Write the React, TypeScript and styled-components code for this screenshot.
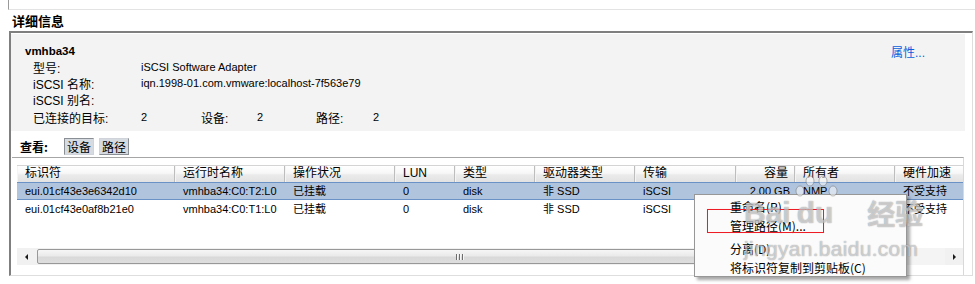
import React from "react";
import styled, { createGlobalStyle } from "styled-components";

const Global = createGlobalStyle`
  html, body { margin: 0; padding: 0; background: #ffffff; }
  body {
    font-family: "Liberation Sans", "Noto Sans CJK SC", sans-serif;
    font-size: 11px;
    color: #000;
  }
  * { box-sizing: border-box; }
`;

const Page = styled.div`
  position: relative;
  width: 975px;
  height: 284px;
  overflow: hidden;
`;

const PrevPanelEdge = styled.div`
  margin-left: 8px;
  height: 10px;
  border-left: 1px solid #9a9a9a;
  border-bottom: 1px solid #e3e3e3;
`;

const SectionTitle = styled.div`
  padding-left: 12px;
  height: 21px;
  line-height: 21px;
  font-family: "Noto Sans CJK SC", sans-serif;
  font-size: 13px;
  font-weight: bold;
`;

const Panel = styled.div`
  margin-left: 9px;
  width: 964px;
  height: 245px;
  border-top: 2px solid #7f7f7f;
  border-left: 2px solid #7f7f7f;
  border-right: 1px solid #dedede;
  border-bottom: 1px solid #dedede;
`;

const InfoBox = styled.div`
  margin: 1px 7px 0 0;
  height: 97px;
  background: #f3f3f3;
  padding: 9px 0 6px 0;
`;

const HeadRow = styled.div`
  display: flex;
  justify-content: space-between;
  align-items: center;
  height: 16px;
  padding: 0 40px 0 14px;
`;

const AdapterName = styled.span`
  font-weight: bold;
  font-size: 11.5px;
`;

const Link = styled.a`
  color: #0a5fdc;
  font-size: 12px;
  text-decoration: none;
  cursor: pointer;
`;

const FieldRow = styled.div<{ $gap?: number }>`
  display: flex;
  align-items: center;
  height: 16px;
  padding-left: 22px;
  margin-top: ${(p) => p.$gap ?? 0}px;
`;

const Label = styled.span<{ $w?: number }>`
  flex: 0 0 ${(p) => (p.$w ? `${p.$w}px` : "auto")};
  font-size: 12px;
  white-space: nowrap;
`;

const Value = styled.span<{ $w?: number }>`
  flex: 0 0 ${(p) => (p.$w ? `${p.$w}px` : "auto")};
  font-size: 11px;
  white-space: nowrap;
`;

const ViewBar = styled.div`
  display: flex;
  align-items: center;
  gap: 5px;
  height: 17px;
  margin-top: 7px;
  padding-left: 9px;
`;

const ViewLabel = styled.span`
  flex: 0 0 39px;
  font-family: "Noto Sans CJK SC", sans-serif;
  font-weight: bold;
  font-size: 12px;
`;

const ToggleButton = styled.button<{ $pressed?: boolean }>`
  width: 30px;
  height: 17px;
  padding: 0;
  margin: 0;
  font-family: "Noto Sans CJK SC", sans-serif;
  font-size: 12px;
  line-height: 15px;
  color: #000;
  background: #d6dbe2;
  border: 1px solid;
  border-color: ${(p) =>
    p.$pressed ? "#8a8f96 #d0d4da #d0d4da #8a8f96" : "#d0d4da #8a8f96 #8a8f96 #d0d4da"};
`;

const TableFrame = styled.div`
  margin: 2px 8px 0 1px;
  height: 118px;
  border-top: 1px solid #a6a6a6;
  border-right: 1px solid #d9d9d9;
  padding: 7px 0 0 5px;
`;

const ListView = styled.div`
  width: 946px;
  overflow: hidden;
`;

const HeaderRow = styled.div`
  display: flex;
  height: 17px;
  border-top: 1px solid #d4d4d4;
`;

const HeaderCell = styled.div<{ $w: number; $right?: boolean }>`
  flex: 0 0 ${(p) => p.$w}px;
  height: 16px;
  padding: 0 6px 0 7px;
  border-right: 1px solid #bdbdbd;
  border-left: 1px solid #f4f4f4;
  background: linear-gradient(#ffffff 0%, #f7f7f7 45%, #ebebeb 55%, #e2e2e2 100%);
  font-size: 12px;
  line-height: 15px;
  white-space: nowrap;
  text-align: ${(p) => (p.$right ? "right" : "left")};
`;

const Body = styled.div`
  height: 66px;
`;

const Row = styled.div<{ $selected?: boolean }>`
  display: flex;
  height: 18px;
  border-top: 1px solid ${(p) => (p.$selected ? "#6a92c6" : "transparent")};
  border-bottom: 1px solid ${(p) => (p.$selected ? "#6a92c6" : "transparent")};
  background: ${(p) => (p.$selected ? "#b0c4de" : "transparent")};
`;

const Cell = styled.div<{ $w: number; $right?: boolean }>`
  flex: 0 0 ${(p) => p.$w}px;
  padding: 0 5px 0 8px;
  line-height: 16px;
  white-space: nowrap;
  overflow: hidden;
  text-align: ${(p) => (p.$right ? "right" : "left")};
`;

const HScroll = styled.div`
  display: flex;
  align-items: center;
  height: 17px;
  background: #f1f1f1;
`;

const ArrowButton = styled.div`
  flex: 0 0 18px;
  height: 17px;
  display: flex;
  align-items: center;
  justify-content: center;
`;

const Arrow = styled.span<{ $dir: "left" | "right" }>`
  width: 0;
  height: 0;
  border-top: 3px solid transparent;
  border-bottom: 3px solid transparent;
  ${(p) => (p.$dir === "left" ? "border-right: 3px solid #1a1a1a;" : "border-left: 3px solid #1a1a1a;")}
`;

const Thumb = styled.div`
  flex: 0 0 846px;
  margin-left: 2px;
  height: 15px;
  border: 1px solid #989898;
  border-radius: 2px;
  background: linear-gradient(#f6f6f6 0%, #eaeaea 45%, #d9d9d9 55%, #dedede 100%);
  display: flex;
  align-items: center;
  justify-content: center;
  gap: 1px;
`;

const GripLine = styled.span`
  width: 1px;
  height: 6px;
  background: #6d6d6d;
  box-shadow: 1px 0 0 #f7f7f7;
  margin-right: 1px;
`;

const Track = styled.div`
  flex: 1;
  height: 17px;
  background: #f4f4f4;
`;

const ContextMenu = styled.div`
  position: absolute;
  left: 694px;
  top: 194px;
  width: 213px;
  height: 83px;
  padding: 2px 0;
  background: #fbfbfb;
  border: 1px solid #979797;
  box-shadow: 3px 3px 3px rgba(0, 0, 0, 0.35);
  font-family: "Noto Sans CJK SC", sans-serif;
  font-size: 12px;
`;

const MenuItem = styled.div`
  height: 19px;
  line-height: 19px;
  padding-left: 35px;
  white-space: nowrap;
`;

const MenuSeparator = styled.div`
  height: 4px;
`;

const Annotation = styled.div`
  position: absolute;
  left: 707px;
  top: 209px;
  width: 117px;
  height: 24px;
  border: 1px solid #ee1c24;
  box-shadow: 0 0 0.5px #ee1c24;
`;

const Watermark = styled.div`
  position: absolute;
  left: 744px;
  top: 176px;
  pointer-events: none;
  color: rgba(255, 255, 255, 0.5);
  text-shadow: 0 0 1px rgba(80, 80, 80, 0.45), 0 0 1px rgba(80, 80, 80, 0.3);
  font-family: "Liberation Sans", "Noto Sans CJK SC", sans-serif;
`;

const WatermarkLogo = styled.div`
  display: flex;
  align-items: flex-end;
  height: 52px;
  font-size: 30px;
  font-weight: bold;
  line-height: 30px;
`;

const DuMark = styled.span`
  position: relative;
  margin-left: 6px;
`;

const Toes = styled.svg`
  position: absolute;
  left: -4px;
  top: -24px;
`;

const WatermarkHan = styled.span`
  margin-left: 34px;
  font-family: "Noto Sans CJK SC", sans-serif;
  font-size: 28px;
`;

const WatermarkSite = styled.div`
  margin-top: 10px;
  font-size: 21px;
  line-height: 22px;
  letter-spacing: 0.3px;
`;

type Col = { title: string; width: number; right?: boolean };

const columns: Col[] = [
  { title: "标识符", width: 158 },
  { title: "运行时名称", width: 110 },
  { title: "操作状况", width: 110 },
  { title: "LUN", width: 60 },
  { title: "类型", width: 80 },
  { title: "驱动器类型", width: 100 },
  { title: "传输", width: 101 },
  { title: "容量", width: 59, right: true },
  { title: "所有者", width: 100 },
  { title: "硬件加速", width: 100 },
];

const rows: string[][] = [
  ["eui.01cf43e3e6342d10", "vmhba34:C0:T2:L0", "已挂载", "0", "disk", "非 SSD", "iSCSI", "2.00 GB", "NMP", "不受支持"],
  ["eui.01cf43e0af8b21e0", "vmhba34:C0:T1:L0", "已挂载", "0", "disk", "非 SSD", "iSCSI", "2.00 GB", "NMP", "不受支持"],
];

export default function App() {
  return (
    <Page>
      <Global />
      <PrevPanelEdge />
      <SectionTitle>详细信息</SectionTitle>
      <Panel>
        <InfoBox>
          <HeadRow>
            <AdapterName>vmhba34</AdapterName>
            <Link>属性...</Link>
          </HeadRow>
          <FieldRow>
            <Label $w={108}>型号:</Label>
            <Value>iSCSI Software Adapter</Value>
          </FieldRow>
          <FieldRow>
            <Label $w={108}>iSCSI 名称:</Label>
            <Value>iqn.1998-01.com.vmware:localhost-7f563e79</Value>
          </FieldRow>
          <FieldRow>
            <Label $w={108}>iSCSI 别名:</Label>
          </FieldRow>
          <FieldRow $gap={2}>
            <Label $w={108}>已连接的目标:</Label>
            <Value $w={60}>2</Value>
            <Label $w={56}>设备:</Label>
            <Value $w={59}>2</Value>
            <Label $w={57}>路径:</Label>
            <Value>2</Value>
          </FieldRow>
        </InfoBox>
        <ViewBar>
          <ViewLabel>查看:</ViewLabel>
          <ToggleButton $pressed>设备</ToggleButton>
          <ToggleButton>路径</ToggleButton>
        </ViewBar>
        <TableFrame>
          <ListView>
            <HeaderRow>
              {columns.map((c) => (
                <HeaderCell key={c.title} $w={c.width} $right={c.right}>
                  {c.title}
                </HeaderCell>
              ))}
            </HeaderRow>
            <Body>
              {rows.map((r, i) => (
                <Row key={r[0]} $selected={i === 0}>
                  {r.map((v, j) => (
                    <Cell key={j} $w={columns[j].width} $right={columns[j].right}>
                      {v}
                    </Cell>
                  ))}
                </Row>
              ))}
            </Body>
            <HScroll>
              <ArrowButton>
                <Arrow $dir="left" />
              </ArrowButton>
              <Thumb>
                <GripLine />
                <GripLine />
                <GripLine />
              </Thumb>
              <Track />
              <ArrowButton>
                <Arrow $dir="right" />
              </ArrowButton>
            </HScroll>
          </ListView>
        </TableFrame>
      </Panel>

      <ContextMenu>
        <MenuItem>重命名(R)</MenuItem>
        <MenuItem>管理路径(M)...</MenuItem>
        <MenuSeparator />
        <MenuItem>分离(D)</MenuItem>
        <MenuItem>将标识符复制到剪贴板(C)</MenuItem>
      </ContextMenu>
      <Annotation />

      <Watermark>
        <WatermarkLogo>
          <span>Bai</span>
          <DuMark>
            <Toes width="46" height="26" viewBox="0 0 46 26">
              <g fill="rgba(255,255,255,0.5)" stroke="rgba(100,100,100,0.45)" strokeWidth="1">
                <ellipse cx="7" cy="17" rx="4" ry="5" />
                <ellipse cx="17" cy="7" rx="4" ry="5" />
                <ellipse cx="30" cy="7" rx="4" ry="5" />
                <ellipse cx="40" cy="17" rx="4" ry="5" />
              </g>
            </Toes>
            du
          </DuMark>
          <WatermarkHan>经验</WatermarkHan>
        </WatermarkLogo>
        <WatermarkSite>jingyan.baidu.com</WatermarkSite>
      </Watermark>
    </Page>
  );
}
